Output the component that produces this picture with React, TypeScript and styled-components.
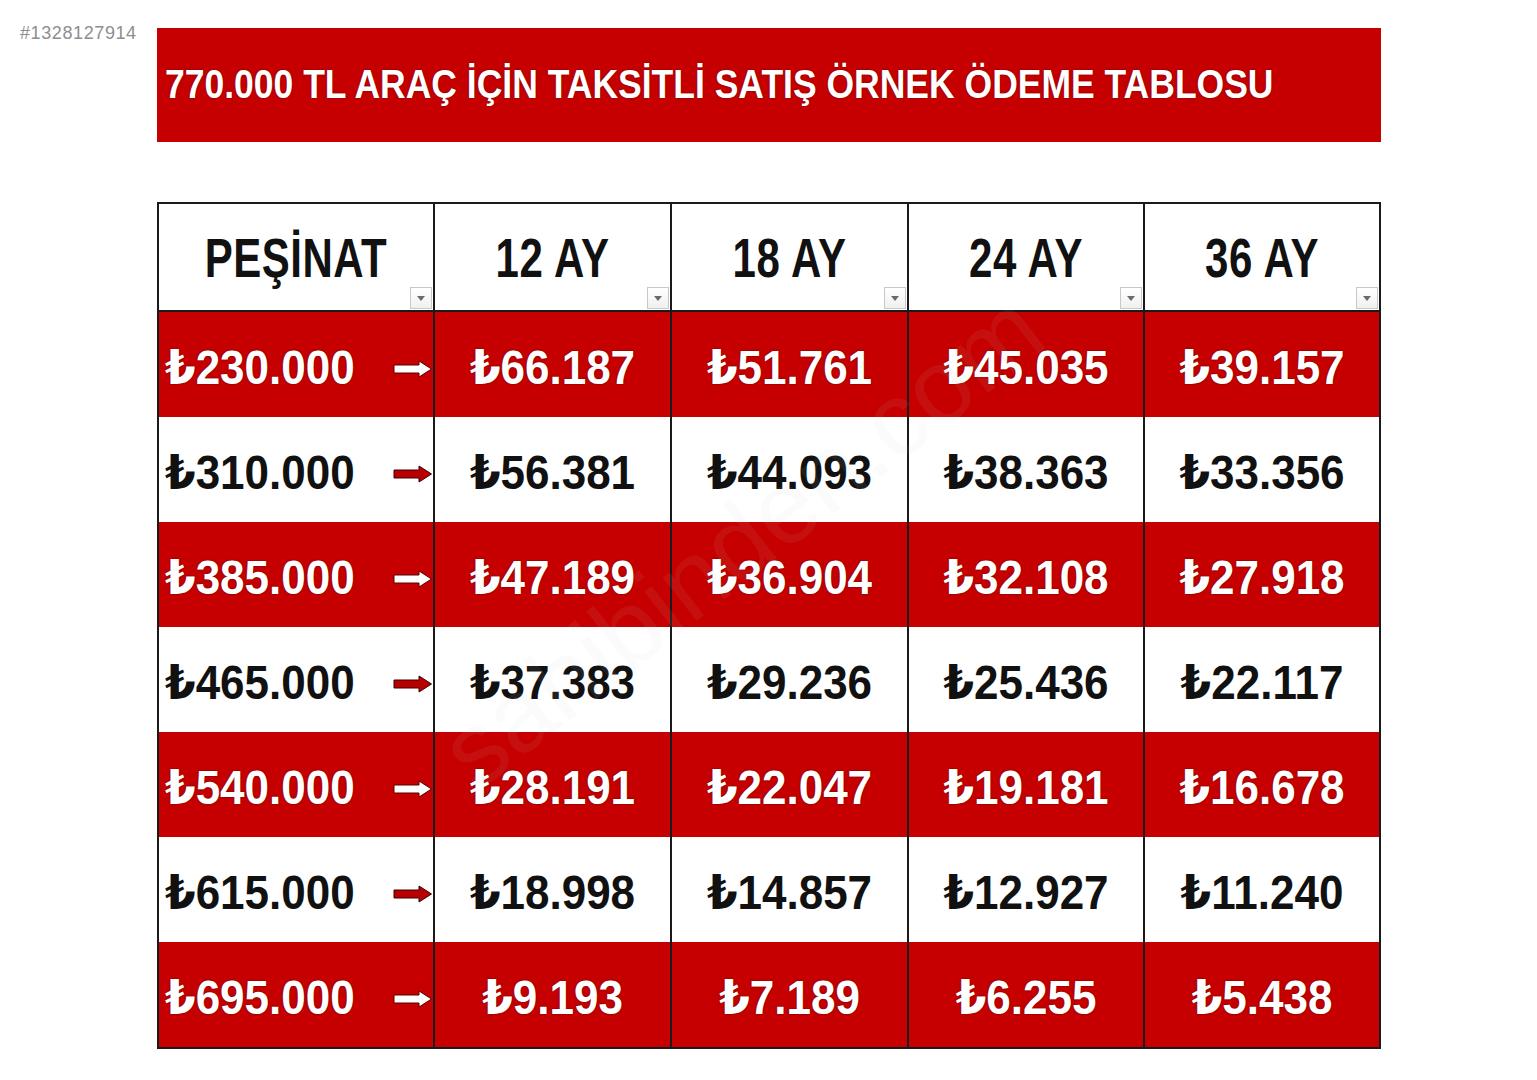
import React from "react";
import styled, { createGlobalStyle } from "styled-components";

const RED = "#c60000";

const Global = createGlobalStyle`
  html, body { margin: 0; padding: 0; background: #ffffff; }
  body { font-family: "Liberation Sans", "DejaVu Sans", sans-serif; }
`;

const Page = styled.div`
  width: 1537px;
  height: 1080px;
  box-sizing: border-box;
  padding: 28px 0 0 20px;
  position: relative;
  overflow: hidden;
`;

const TopRow = styled.div`
  display: flex;
  align-items: flex-start;
`;

const AdId = styled.div`
  width: 137px;
  margin-top: -5px;
  font-family: "Liberation Sans", sans-serif;
  font-size: 18px;
  color: #8e8e8e;
  letter-spacing: 0.6px;
`;

const Banner = styled.div`
  width: 1224px;
  height: 114px;
  background: ${RED};
  display: flex;
  align-items: center;
  box-sizing: border-box;
  padding: 0 0 0 8px;
`;

const BannerTitle = styled.h1`
  margin: 0;
  font-family: "Liberation Sans", "DejaVu Sans", sans-serif;
  font-weight: 700;
  font-size: 35.5px;
  color: #fff;
  display: inline-block;
  transform: scaleY(1.12);
  text-shadow: 0 0 2px rgba(90, 0, 0, 0.8);
  white-space: nowrap;
`;

const Table = styled.div`
  margin: 60px 0 0 137px;
  width: 1224px;
  display: grid;
  grid-template-columns: 276px 237px 237px 236px 234px;
  border: 2px solid #1a1a1a;
  box-sizing: border-box;
  position: relative;
`;

const HeadCell = styled.div<{ $last?: boolean }>`
  height: 108px;
  display: flex;
  align-items: center;
  justify-content: center;
  background: #fff;
  border-right: ${(p) => (p.$last ? "none" : "2px solid #1a1a1a")};
  border-bottom: 2px solid #1a1a1a;
  position: relative;
  box-sizing: border-box;
`;

const HeadText = styled.span`
  font-family: "Liberation Sans", "DejaVu Sans", sans-serif;
  font-weight: 700;
  font-size: 42px;
  color: #111;
  display: inline-block;
  transform: scaleY(1.3);
  margin-top: 4px;
  letter-spacing: 0.5px;
`;

const FilterBtn = styled.div`
  position: absolute;
  right: 1px;
  bottom: 1px;
  width: 22px;
  height: 22px;
  box-sizing: border-box;
  border: 1px solid #c8c8c8;
  background: linear-gradient(#ffffff, #f0f0f0);
  display: flex;
  align-items: center;
  justify-content: center;
`;

const Cell = styled.div<{ $red: boolean; $last?: boolean; $first?: boolean }>`
  height: 105px;
  box-sizing: border-box;
  background: ${(p) => (p.$red ? RED : "#fff")};
  border-right: ${(p) => (p.$last ? "none" : "2px solid #1a1a1a")};
  display: flex;
  align-items: center;
  justify-content: ${(p) => (p.$first ? "space-between" : "center")};
  padding: ${(p) => (p.$first ? "0 0 0 6px" : "0")};
`;

const Amount = styled.span<{ $red: boolean }>`
  font-family: "Liberation Sans", "DejaVu Sans", sans-serif;
  font-weight: 700;
  font-size: 44px;
  color: ${(p) => (p.$red ? "#fff" : "#111")};
  display: inline-block;
  transform: scaleY(1.1);
  margin-top: 4px;
  text-shadow: ${(p) =>
    p.$red ? "0 0 2px rgba(80,0,0,0.9)" : "0 0 1px rgba(255,255,255,0.9)"};
  white-space: nowrap;
`;

const ArrowWrap = styled.span`
  display: flex;
  align-items: center;
  margin-top: 8px;
`;

const Watermark = styled.div`
  position: absolute;
  left: 455px;
  top: 705px;
  font-family: "Liberation Sans", sans-serif;
  font-size: 104px;
  color: rgba(200, 200, 200, 0.08);
  transform: rotate(-38deg);
  transform-origin: left center;
  pointer-events: none;
  white-space: nowrap;
`;

const Arrow = ({ red }: { red: boolean }) => (
  <svg width="40" height="18" viewBox="0 0 40 18">
    <path
      d="M1 5 H26 V1 L38.5 9 L26 17 V13 H1 Z"
      fill={red ? "#ffffff" : "#b80000"}
      stroke={red ? "#5a0000" : "#3a0000"}
      strokeWidth="1"
      strokeLinejoin="round"
    />
  </svg>
);

const Caret = () => (
  <svg width="8" height="5" viewBox="0 0 8 5">
    <path d="M0 0 H8 L4 5 Z" fill="#6a6a6a" />
  </svg>
);

const headers = ["PEŞİNAT", "12 AY", "18 AY", "24 AY", "36 AY"];

const rows: string[][] = [
  ["230.000", "66.187", "51.761", "45.035", "39.157"],
  ["310.000", "56.381", "44.093", "38.363", "33.356"],
  ["385.000", "47.189", "36.904", "32.108", "27.918"],
  ["465.000", "37.383", "29.236", "25.436", "22.117"],
  ["540.000", "28.191", "22.047", "19.181", "16.678"],
  ["615.000", "18.998", "14.857", "12.927", "11.240"],
  ["695.000", "9.193", "7.189", "6.255", "5.438"],
];

export default function App() {
  return (
    <>
      <Global />
      <Page>
        <TopRow>
          <AdId>#1328127914</AdId>
          <Banner>
            <BannerTitle>770.000 TL ARAÇ İÇİN TAKSİTLİ SATIŞ ÖRNEK ÖDEME TABLOSU</BannerTitle>
          </Banner>
        </TopRow>
        <Table>
          {headers.map((h, i) => (
            <HeadCell key={h} $last={i === headers.length - 1}>
              <HeadText>{h}</HeadText>
              <FilterBtn>
                <Caret />
              </FilterBtn>
            </HeadCell>
          ))}
          {rows.map((r, ri) => {
            const red = ri % 2 === 0;
            return r.map((v, ci) => (
              <Cell
                key={`${ri}-${ci}`}
                $red={red}
                $first={ci === 0}
                $last={ci === r.length - 1}
              >
                <Amount $red={red}>₺{v}</Amount>
                {ci === 0 && (
                  <ArrowWrap>
                    <Arrow red={red} />
                  </ArrowWrap>
                )}
              </Cell>
            ));
          })}
        </Table>
        <Watermark>sahibinden.com</Watermark>
      </Page>
    </>
  );
}
